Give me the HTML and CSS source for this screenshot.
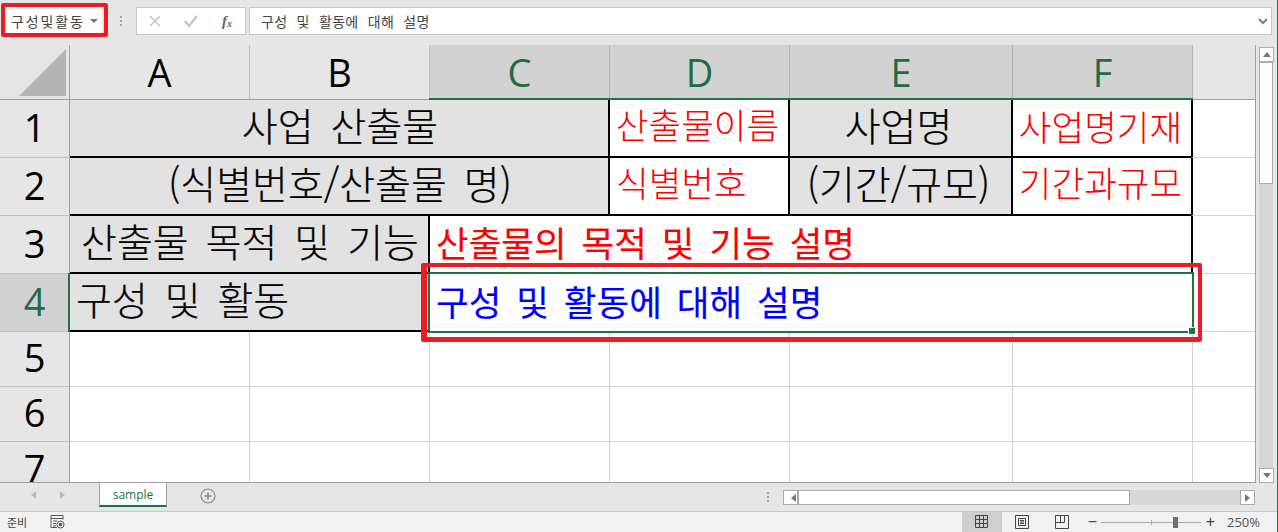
FILE: index.html
```html
<!DOCTYPE html>
<html lang="ko">
<head>
<meta charset="utf-8">
<title>sample</title>
<link rel="stylesheet" href="styles.css">
</head>
<body>
<div class="app">
  <div class="formula-bar">
    <div class="name-box"><span>구성및활동</span><i class="caret"></i></div>
    <div class="grip"></div>
    <div class="fx-box">
      <svg width="14" height="14" viewBox="0 0 14 14"><path d="M2 2l10 10M12 2L2 12" stroke="#c4c4c4" stroke-width="1.6" fill="none"/></svg>
      <svg width="16" height="14" viewBox="0 0 16 14"><path d="M2 7l4 5 8-10" stroke="#c4c4c4" stroke-width="2.2" fill="none"/></svg>
      <span class="fx">f<sub>x</sub></span>
    </div>
    <div class="formula-input"><span>구성 및 활동에 대해 설명</span>
      <svg width="10" height="7" viewBox="0 0 10 7"><path d="M1 1l4 4 4-4" stroke="#7f7f7f" stroke-width="2" fill="none"/></svg>
    </div>
  </div>

  <div class="sheet-row">
    <div class="grid">
      <div class="corner"><svg width="47" height="47" viewBox="0 0 47 47"><path d="M47 0V47H0Z" fill="#b4b4b4"/></svg></div>
      <div class="ch">A</div><div class="ch">B</div>
      <div class="ch sel">C</div><div class="ch sel">D</div><div class="ch sel">E</div><div class="ch sel">F</div>
      <div class="ch blank"></div>

      <div class="rh">1</div>
      <div class="c gray span3 big ctr bb">사업 산출물</div>
      <div class="c red mid ctr bl bb">산출물이름</div>
      <div class="c gray big ctr bl bb nudge">사업명</div>
      <div class="c red mid ctr bl bb low">사업명기재</div>
      <div class="c bl"></div>

      <div class="rh">2</div>
      <div class="c gray span3 big ctr bb">(식별번호/산출물 명)</div>
      <div class="c red mid left bl bb">식별번호</div>
      <div class="c gray big ctr bl bb nudge">(기간/규모)</div>
      <div class="c red mid ctr bl bb">기간과규모</div>
      <div class="c bl"></div>

      <div class="rh">3</div>
      <div class="c gray span2 big ctr bb">산출물 목적 및 기능</div>
      <div class="c red span4 bold left bl bb">산출물의 목적 및 기능 설명</div>
      <div class="c bl"></div>

      <div class="rh sel">4</div>
      <div class="c gray span2 big left top bb">구성 및 활동</div>
      <div class="c blue span4 bold left">구성 및 활동에 대해 설명</div>
      <div class="c"></div>

      <div class="rh">5</div>
      <div class="c"></div><div class="c"></div><div class="c"></div><div class="c"></div><div class="c"></div><div class="c"></div><div class="c"></div>
      <div class="rh">6</div>
      <div class="c"></div><div class="c"></div><div class="c"></div><div class="c"></div><div class="c"></div><div class="c"></div><div class="c"></div>
      <div class="rh clip"><span>7</span></div>
      <div class="c"></div><div class="c"></div><div class="c"></div><div class="c"></div><div class="c"></div><div class="c"></div><div class="c"></div>

      <div class="selection"><i class="handle"></i></div>
      <div class="row-mark"></div>
      <div class="col-mark"></div>
    </div>
    <div class="vscroll">
      <div class="sb-btn"><i class="tri up"></i></div>
      <div class="sb-thumb"></div>
      <div class="sb-track"></div>
      <div class="sb-btn"><i class="tri down"></i></div>
    </div>
  </div>

  <div class="tab-row">
    <div class="tab-nav">
      <i class="tri left pale"></i><i class="tri right pale"></i>
    </div>
    <div class="tab">sample</div>
    <div class="add"><svg width="16" height="16" viewBox="0 0 16 16"><circle cx="8" cy="8" r="7" fill="none" stroke="#8a8a8a" stroke-width="1.2"/><path d="M8 4.500v7M4.500 8h7" stroke="#8a8a8a" stroke-width="1.6"/></svg></div>
    <div class="spacer"></div>
    <div class="grip small"></div>
    <div class="hscroll">
      <div class="sb-btn h"><i class="tri left"></i></div>
      <div class="sb-thumb h"></div>
      <div class="sb-track"></div>
      <div class="sb-btn h"><i class="tri right"></i></div>
    </div>
  </div>

  <div class="status">
    <span class="ready">준비</span>
    <svg class="macro" width="15" height="14" viewBox="0 0 15 14"><path d="M1 .5h12M1 .5v12h6M13 .5v4M1 3.500h12M3 6h4M3 8.500h3M3 11h3" stroke="#5a5a5a" fill="none"/><circle cx="10.500" cy="9.500" r="3.500" fill="none" stroke="#5a5a5a"/><circle cx="10.500" cy="9.500" r="1.800" fill="#5a5a5a"/></svg>
    <div class="spacer"></div>
    <div class="view active"><svg width="14" height="14" viewBox="0 0 14 14"><path d="M.5.500h12v12H.5zM4.500.5v12M8.500.5v12M.5 4.500h12M.5 8.500h12" fill="none" stroke="#444"/></svg></div>
    <div class="view"><svg width="14" height="14" viewBox="0 0 14 14"><path d="M.5.500h13v13H.5zM3.500 3.500h7v7h-7zM5 5.500h4M5 7h4M5 8.500h4" fill="none" stroke="#444"/></svg></div>
    <div class="view"><svg width="14" height="14" viewBox="0 0 14 14"><path d="M.5 13.500V.5h13v13zM.5 7.500h9V.5M5.500.5v7" fill="none" stroke="#444"/></svg></div>
    <div class="zoom">
      <span class="z-btn">−</span>
      <div class="slider"><i class="tick"></i><i class="thumb"></i></div>
      <span class="z-btn">+</span>
      <span class="pct">250%</span>
    </div>
  </div>
  <div class="mark mark-name"></div>
  <div class="mark mark-cell"></div>
</div>
</body>
</html>
```
FILE: styles.css
```css
* { box-sizing: border-box; }
html, body { margin: 0; padding: 0; }
body { width: 1278px; height: 532px; overflow: hidden; background: #e6e6e6; font-family: "Noto Sans CJK KR", "Noto Sans", sans-serif; }
.app { position: relative; width: 1278px; height: 532px; display: flex; flex-direction: column; border-right: 1px solid #217346; }

.formula-bar { height: 45px; display: flex; align-items: flex-start; padding: 7px 5px 0 6px; background: #e6e6e6; }
.name-box { width: 96px; height: 28px; background: #fff; display: flex; align-items: center; padding: 0 5px; justify-content: space-between; font-size: 14px; letter-spacing: 1.9px; color: #444; }
.caret { width: 0; height: 0; border: 4px solid transparent; border-top: 4px solid #777; border-bottom: 0; margin-right: -1px; }
.grip { width: 2px; height: 10px; margin: 9px 14px 0 18px; background: repeating-linear-gradient(#a4a4a4 0 2px, transparent 2px 4px); }
.fx-box { width: 110px; height: 28px; background: #fff; border: 1px solid #c6c6c6; display: flex; align-items: center; padding: 0 11px; gap: 21px; margin-right: 3px; }
.fx { font-family: "Liberation Serif", serif; font-style: italic; font-weight: bold; font-size: 15px; color: #666; margin-left: 2px; line-height: 1; }
.fx sub { font-size: 10px; vertical-align: -1px; }
.formula-input { flex: 1; height: 28px; background: #fff; border: 1px solid #c6c6c6; display: flex; align-items: center; justify-content: space-between; padding: 0 3px 0 11px; font-size: 14px; color: #444; letter-spacing: .3px; word-spacing: 5px; }

.sheet-row { height: 438px; display: flex; }
.grid { position: relative; width: 1256px; display: grid; grid-template-columns: 70px 180px 180px 180px 180px 223px 180px 63px; grid-template-rows: 55px 58px 58px 58px 58px 55px 55px 41px; border-right: 1px solid #a0a0a0; border-bottom: 1px solid #a0a0a0; overflow: hidden; background: #fff; }
.corner { background: #e6e6e6; border-right: 1px solid #a0a0a0; border-bottom: 1px solid #a0a0a0; padding: 4px 0 0 19px; line-height: 0; }
.ch { background: #e6e6e6; border-right: 1px solid #c0c0c0; border-bottom: 1px solid #a0a0a0; display: flex; align-items: center; justify-content: center; font-family: "Open Sans", sans-serif; font-size: 38px; color: #000; }
.ch.sel { background: #d2d2d2; color: #1f6b43; border-right-color: #b4b4b4; }
.ch.blank { background: #e6e6e6; border: 0; border-bottom: 1px solid #a0a0a0; }
.rh { background: #e6e6e6; border-right: 1px solid #a0a0a0; border-bottom: 1px solid #c0c0c0; display: flex; align-items: center; justify-content: center; font-family: "Open Sans", sans-serif; font-size: 38px; color: #000; line-height: 1; padding-bottom: 4px; }
.rh.sel { background: #d2d2d2; color: #1f6b43; }
.rh.clip { align-items: flex-start; padding-top: 7px; padding-bottom: 0; overflow: hidden; border-bottom: 0; }
.c { border-right: 1px solid #d4d4d4; border-bottom: 1px solid #d4d4d4; display: flex; align-items: center; white-space: nowrap; line-height: 1; min-width: 0; }
.span2 { grid-column: span 2; border-right: 0; }
.span3 { grid-column: span 3; border-right: 0; }
.span4 { grid-column: span 4; border-right: 0; }
.gray { background: #e2e2e2; color: #000; }
.big { font-size: 39px; font-weight: 300; word-spacing: 6px; padding-bottom: 7px; -webkit-text-stroke: .2px currentColor; }
.nudge { padding-right: 5px; }
.ctr { justify-content: center; }
.left { padding-left: 6px; }
.top { align-items: flex-start; padding-top: 5px; padding-bottom: 0; }
.red { color: #f00; }
.blue { color: #00f; }
.mid { font-size: 35.500px; font-weight: 300; padding-bottom: 9px; }
.mid.ctr { padding-right: 4px; }
.low { padding-top: 0; padding-bottom: 4px; }
.bold { font-size: 35.500px; font-weight: 400; word-spacing: 5px; padding-bottom: 4px; -webkit-text-stroke: .15px currentColor; }
.bl { border-left: 2px solid #000; margin-left: -2px; }
.bb { border-bottom: 2px solid #000; }

.selection { position: absolute; left: 428px; top: 227px; width: 766px; height: 61px; border: 2px solid #217346; }
.handle { position: absolute; right: -3px; bottom: -3px; width: 6px; height: 6px; background: #217346; outline: 1px solid #fff; }
.row-mark { position: absolute; left: 68px; top: 228px; width: 2px; height: 59px; background: #217346; }
.col-mark { position: absolute; left: 429px; top: 53px; width: 764px; height: 2px; background: #217346; }

.vscroll { width: 21px; padding: 2px 4px 0 3px; display: flex; flex-direction: column; }
.sb-btn { width: 15px; height: 15px; background: #fff; border: 1px solid #ababab; display: flex; align-items: center; justify-content: center; flex: none; }
.sb-thumb { background: #fff; border: 1px solid #ababab; height: 122px; flex: none; }
.sb-track { flex: 1; background: #d8d8d8; }
.tri { width: 0; height: 0; display: block; border: 4px solid transparent; }
.tri.up { border-top: 0; border-bottom: 5px solid #777; }
.tri.down { border-bottom: 0; border-top: 5px solid #777; }
.tri.left { border-left: 0; border-right: 5px solid #777; }
.tri.right { border-right: 0; border-left: 5px solid #777; }
.tri.pale.left { border-right-color: #bdbdbd; }
.tri.pale.right { border-left-color: #bdbdbd; }

.tab-row { height: 29px; display: flex; border-bottom: 1px solid #c6c6c6; }
.tab-nav { width: 99px; display: flex; align-items: center; gap: 24px; padding: 0 0 4px 25px; }
.tab { width: 68px; height: 25px; background: #fff; border-left: 1px solid #a0a0a0; border-right: 1px solid #a0a0a0; border-bottom: 2px solid #217346; margin-top: -1px; color: #217346; font-family: "Open Sans", sans-serif; font-size: 12px; display: flex; align-items: center; justify-content: center; padding-top: 1px; }
.add { width: 82px; padding: 5px 0 0 33px; line-height: 0; }
.spacer { flex: 1; }
.grip.small { margin: 9px 14px 0 0; }
.hscroll { width: 472px; height: 15px; margin: 7px 22px 0 0; display: flex; }
.sb-btn.h { width: 15px; }
.sb-thumb.h { width: 332px; height: 15px; }

.status { height: 20px; background: #f1f1f1; display: flex; align-items: center; padding-left: 7px; font-size: 11px; color: #444; }
.ready { width: 43px; }
.macro { flex: none; }
.view { width: 40px; height: 20px; display: flex; align-items: center; justify-content: center; }
.view.active { background: #cfcfcf; }
.zoom { width: 195px; display: flex; align-items: center; padding-left: 4px; }
.z-btn { width: 13px; font-family: "Liberation Sans", sans-serif; font-size: 16px; color: #444; text-align: center; line-height: 1; }
.slider { position: relative; width: 100px; height: 1px; background: #a8a8a8; margin: 0 3px 0 2px; }
.tick { position: absolute; left: 50px; top: -2px; width: 1px; height: 5px; background: #a8a8a8; }
.thumb { position: absolute; left: 72px; top: -5px; width: 5px; height: 11px; background: #6e6e6e; }
.pct { margin-left: 10px; font-family: "Open Sans", sans-serif; font-size: 13px; color: #555; }

.mark { position: absolute; border: 4px solid #ed1c24; border-radius: 2px; pointer-events: none; }
.mark-name { left: 1px; top: 3px; width: 107px; height: 34px; }
.mark-cell { left: 421px; top: 263px; width: 781px; height: 79px; border-width: 4px 4px 5px 6px; }
```
